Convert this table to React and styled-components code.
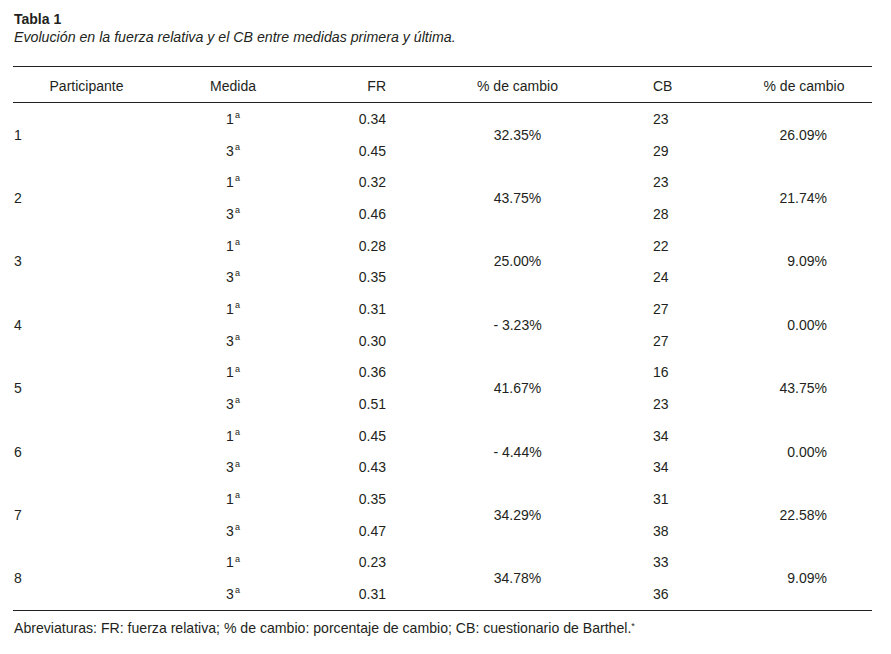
import React from 'react';
import styled, { createGlobalStyle } from 'styled-components';

const rows = [
  { id: 1, fr: ['0.34', '0.45'], frPct: '32.35%', cb: ['23', '29'], cbPct: '26.09%' },
  { id: 2, fr: ['0.32', '0.46'], frPct: '43.75%', cb: ['23', '28'], cbPct: '21.74%' },
  { id: 3, fr: ['0.28', '0.35'], frPct: '25.00%', cb: ['22', '24'], cbPct: '9.09%' },
  { id: 4, fr: ['0.31', '0.30'], frPct: '- 3.23%', cb: ['27', '27'], cbPct: '0.00%' },
  { id: 5, fr: ['0.36', '0.51'], frPct: '41.67%', cb: ['16', '23'], cbPct: '43.75%' },
  { id: 6, fr: ['0.45', '0.43'], frPct: '- 4.44%', cb: ['34', '34'], cbPct: '0.00%' },
  { id: 7, fr: ['0.35', '0.47'], frPct: '34.29%', cb: ['31', '38'], cbPct: '22.58%' },
  { id: 8, fr: ['0.23', '0.31'], frPct: '34.78%', cb: ['33', '36'], cbPct: '9.09%' },
];

const COLUMNS = '147px 146px 94px 235px 101px 136px';

export default function App() {
  return (
    <>
      <GlobalStyle />
      <Page>
        <Title>Tabla 1</Title>
        <Caption>Evolución en la fuerza relativa y el CB entre medidas primera y última.</Caption>
        <Table>
          <HeaderRow>
            <Cell $align="center">Participante</Cell>
            <Cell $align="center">Medida</Cell>
            <Cell $align="right" $pr={14}>FR</Cell>
            <Cell $align="center">% de cambio</Cell>
            <Cell $align="left" $pl={18}>CB</Cell>
            <Cell $align="center">% de cambio</Cell>
          </HeaderRow>
          <Body>
            {rows.map((r) => (
              <Block key={r.id}>
                <Cell $col={1} $row="1 / 3" $align="left" $pl={1}>{r.id}</Cell>
                <Cell $col={2} $row={1} $align="center">1<Sup>a</Sup></Cell>
                <Cell $col={2} $row={2} $align="center">3<Sup>a</Sup></Cell>
                <Cell $col={3} $row={1} $align="right" $pr={14}>{r.fr[0]}</Cell>
                <Cell $col={3} $row={2} $align="right" $pr={14}>{r.fr[1]}</Cell>
                <Cell $col={4} $row="1 / 3" $align="center">{r.frPct}</Cell>
                <Cell $col={5} $row={1} $align="left" $pl={18}>{r.cb[0]}</Cell>
                <Cell $col={5} $row={2} $align="left" $pl={18}>{r.cb[1]}</Cell>
                <Cell $col={6} $row="1 / 3" $align="right" $pr={45}>{r.cbPct}</Cell>
              </Block>
            ))}
          </Body>
        </Table>
        <Note>
          Abreviaturas: FR: fuerza relativa; % de cambio: porcentaje de cambio; CB: cuestionario de Barthel.<Star>*</Star>
        </Note>
      </Page>
    </>
  );
}

const GlobalStyle = createGlobalStyle`
  body {
    margin: 0;
    background: #ffffff;
    font-family: "Liberation Sans", Arial, sans-serif;
    color: #231f20;
  }
`;

const Page = styled.div`
  width: 859px;
  padding: 10px 0 0 13px;
  font-size: 14px;
`;

const Title = styled.div`
  font-weight: bold;
  line-height: 18px;
  padding-left: 1px;
`;

const Caption = styled.div`
  font-style: italic;
  font-size: 14.2px;
  line-height: 18px;
  padding-left: 1px;
`;

const Table = styled.div`
  margin-top: 20px;
  border-top: 1px solid #231f20;
  border-bottom: 1px solid #231f20;
`;

const HeaderRow = styled.div`
  display: grid;
  grid-template-columns: ${COLUMNS};
  height: 36px;
  padding-top: 2px;
  box-sizing: border-box;
  border-bottom: 1px solid #231f20;
`;

const Body = styled.div`
  display: flex;
  flex-direction: column;
`;

const Block = styled.div`
  display: grid;
  grid-template-columns: ${COLUMNS};
  grid-template-rows: repeat(2, 1fr);
  height: 63.375px;
`;

const Cell = styled.div`
  display: flex;
  align-items: center;
  justify-content: ${(p) => (p.$align === 'left' ? 'flex-start' : p.$align === 'right' ? 'flex-end' : 'center')};
  padding-left: ${(p) => p.$pl || 0}px;
  padding-right: ${(p) => p.$pr || 0}px;
  grid-column: ${(p) => p.$col || 'auto'};
  grid-row: ${(p) => p.$row || 'auto'};
  white-space: nowrap;
`;

const Sup = styled.span`
  font-size: 9px;
  align-self: flex-start;
  margin-top: 7px;
  margin-left: 1px;
`;

const Note = styled.div`
  padding: 6px 0 0 1px;
  line-height: 18px;
  font-size: 14.1px;
`;

const Star = styled.span`
  font-size: 9px;
  vertical-align: 4px;
`;
